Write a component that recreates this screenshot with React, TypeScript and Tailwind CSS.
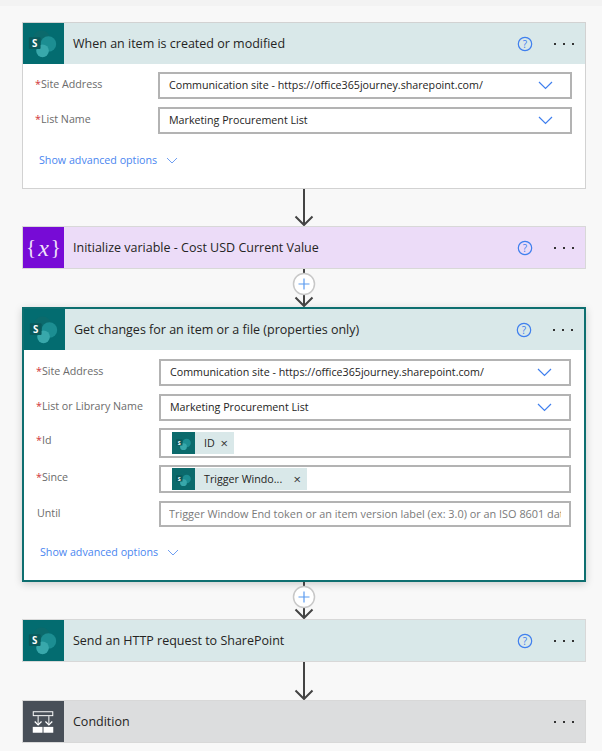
import { ReactNode } from "react";

const font = { fontFamily: '"Open Sans", "Noto Sans", sans-serif' };

function SharePointIcon({ size = 42 }: { size?: number }) {
  return (
    <svg width={size} height={size} viewBox="0 0 42 42">
      <circle cx="19" cy="16" r="9" fill="#0b6a6c" />
      <circle cx="26" cy="21" r="8" fill="#1c8e92" />
      <circle cx="20" cy="28" r="6.5" fill="#38a8ab" />
      <rect x="6" y="14" width="12" height="12" rx="1" fill="#0a5a5c" />
      <text x="12" y="24" textAnchor="middle" fontSize="10" fontWeight="700" fill="#ffffff" fontFamily="Open Sans, sans-serif">
        S
      </text>
    </svg>
  );
}

function VariableIcon() {
  return (
    <div className="flex items-center justify-center text-[#f1e3fb]">
      <span className="text-[21px] leading-none" style={{ fontFamily: '"Liberation Serif", serif' }}>{"{"}</span>
      <span className="mx-[2px] text-[24px] italic leading-none" style={{ fontFamily: '"Liberation Serif", serif' }}>x</span>
      <span className="text-[21px] leading-none" style={{ fontFamily: '"Liberation Serif", serif' }}>{"}"}</span>
    </div>
  );
}

function ConditionIcon() {
  return (
    <svg width="42" height="42" viewBox="0 0 42 42">
      <rect x="10.5" y="10.5" width="20" height="4" fill="none" stroke="#ffffff" strokeWidth="1" />
      <path d="M15.5 15v9M26.5 15v9" stroke="#ffffff" strokeWidth="1" fill="none" />
      <path d="M12 20.500l3.500 3.500 3.500-3.500M23 20.500l3.500 3.500 3.500-3.500" stroke="#ffffff" strokeWidth="1.300" fill="none" />
      <rect x="10" y="26" width="10" height="6" fill="#ffffff" />
      <rect x="21" y="26" width="10" height="6" fill="#ffffff" />
    </svg>
  );
}

function Header({
  icon,
  iconBg,
  bg,
  title,
  help = true,
}: {
  icon: ReactNode;
  iconBg: string;
  bg: string;
  title: string;
  help?: boolean;
}) {
  return (
    <div className={`flex h-[41px] items-center ${bg}`}>
      <div className={`flex h-[41px] w-[41px] shrink-0 items-center justify-center ${iconBg}`}>{icon}</div>
      <div className="ml-[9px] flex-1 pt-[2px] text-[12.500px] text-[#252423]">{title}</div>
      {help && (
        <svg width="16" height="16" viewBox="0 0 16 16" className="mr-[21px]">
          <circle cx="8" cy="8" r="6.700" fill="none" stroke="#3f7fee" strokeWidth="1.200" />
          <text x="8" y="11.500" textAnchor="middle" fontSize="10" fill="#3f7fee" fontFamily="Open Sans, sans-serif">
            ?
          </text>
        </svg>
      )}
      <div className="mr-[11px] flex gap-[7px]">
        <span className="h-[2px] w-[2px] bg-[#333333]" />
        <span className="h-[2px] w-[2px] bg-[#333333]" />
        <span className="h-[2px] w-[2px] bg-[#333333]" />
      </div>
    </div>
  );
}

function Chevron({ className }: { className?: string }) {
  return (
    <svg width="15" height="9" viewBox="0 0 15 9" className={className}>
      <path d="M1 1l6.500 6.500L14 1" fill="none" stroke="#3f7fee" strokeWidth="1.200" />
    </svg>
  );
}

function Field({
  label,
  required = true,
  h,
  children,
  className = "",
}: {
  label: string;
  required?: boolean;
  h: string;
  children: ReactNode;
  className?: string;
}) {
  return (
    <div className={`flex items-start ${className}`}>
      <div className={`w-[123px] shrink-0 pt-[4px] text-[10.700px] leading-[16px] text-[#6b6b6b] ${required ? "" : "pl-[1px]"}`}>
        {required && <span className="text-[#d13438]">*</span>}
        {label}
      </div>
      <div className={`flex flex-1 items-center overflow-hidden border-2 border-[#b3b3b3] bg-white ${h}`}>{children}</div>
    </div>
  );
}

function Dropdown({ text }: { text: string }) {
  return (
    <>
      <span className="ml-[9px] flex-1 text-[10.700px] text-[#252423]">{text}</span>
      <Chevron className="mr-[17px]" />
    </>
  );
}

function Token({ text, wide }: { text: string; wide?: boolean }) {
  return (
    <div className={`ml-[11px] flex h-[22px] items-center bg-[#d9e8e9] ${wide ? "w-[135px]" : "w-[62px]"}`}>
      <div className="flex h-[22px] w-[23px] shrink-0 items-center justify-center bg-[#0b6a6c]">
        <SharePointIcon size={22} />
      </div>
      <span className="ml-[9px] flex-1 text-[10.700px] text-[#252423]">{text}</span>
      <span className="mr-[6px] text-[13px] leading-none text-[#333333]">×</span>
    </div>
  );
}

function ShowAdvanced() {
  return (
    <div className="flex items-center">
      <span className="text-[10.700px] leading-[16px] text-[#4a86f0]">Show advanced options</span>
      <svg width="12" height="7" viewBox="0 0 12 7" className="ml-[9px]">
        <path d="M1 1l5 5 5-5" fill="none" stroke="#6f9ff2" strokeWidth="1" />
      </svg>
    </div>
  );
}

function Arrow({ h }: { h: number }) {
  return (
    <div className="flex justify-center">
      <svg width="20" height={h} viewBox={`0 0 20 ${h}`}>
        <path d={`M10 0v${h - 1}`} stroke="#444444" strokeWidth="2" fill="none" />
        <path d={`M1.500 ${h - 9.500}L10 ${h - 1}L18.500 ${h - 9.500}`} stroke="#444444" strokeWidth="2" fill="none" />
      </svg>
    </div>
  );
}

function PlusConnector({ h }: { h: number }) {
  return (
    <div className="flex justify-center">
      <svg width="26" height={h} viewBox={`0 0 26 ${h}`}>
        <path d={`M13 0v${h - 1}`} stroke="#444444" strokeWidth="2" fill="none" />
        <path d={`M4.500 ${h - 9.500}L13 ${h - 1}L21.500 ${h - 9.500}`} stroke="#444444" strokeWidth="2" fill="none" />
        <circle cx="13" cy="15" r="10.500" fill="#ffffff" stroke="#c8c8c8" strokeWidth="1.500" />
        <path d="M13 9.500v11M7.500 15h11" stroke="#5b9bf0" strokeWidth="1.200" fill="none" />
      </svg>
    </div>
  );
}

export default function App() {
  return (
    <div className="h-[751px] w-[602px] overflow-hidden bg-[#f8f8f8]" style={font}>
      <div className="h-[6px] bg-[#f3f3f3]" />
      <div className="pl-[22px] pr-[16px] pt-[16px]">
        <div className="h-[167px] border border-[#d2d2d2] bg-white">
          <Header icon={<SharePointIcon />} iconBg="bg-[#036c70]" bg="bg-[#d9e8e9]" title="When an item is created or modified" />
          <div className="pl-[12px] pr-[13px] pt-[8px]">
            <Field label="Site Address" h="h-[27px]">
              <Dropdown text="Communication site - https://office365journey.sharepoint.com/" />
            </Field>
            <Field label="List Name" h="h-[27px]" className="mt-[8px]">
              <Dropdown text="Marketing Procurement List" />
            </Field>
            <div className="mt-[18px] pl-[4px]">
              <ShowAdvanced />
            </div>
          </div>
        </div>

        <Arrow h={37} />

        <div className="h-[43px] border border-[#d8d8d8]">
          <Header icon={<VariableIcon />} iconBg="bg-[#770bd6]" bg="bg-[#ecdcf8]" title="Initialize variable - Cost USD Current Value" />
        </div>

        <PlusConnector h={38} />

        <div className="h-[275px] border-2 border-[#0e6f70] bg-white shadow-[0_2px_8px_rgba(0,0,0,0.18)]">
          <Header icon={<SharePointIcon />} iconBg="bg-[#036c70]" bg="bg-[#d9e8e9]" title="Get changes for an item or a file (properties only)" />
          <div className="pl-[12px] pr-[13px] pt-[9px]">
            <Field label="Site Address" h="h-[27px]">
              <Dropdown text="Communication site - https://office365journey.sharepoint.com/" />
            </Field>
            <Field label="List or Library Name" h="h-[27px]" className="mt-[8px]">
              <Dropdown text="Marketing Procurement List" />
            </Field>
            <Field label="Id" h="h-[30px]" className="mt-[7px]">
              <Token text="ID" />
            </Field>
            <Field label="Since" h="h-[28px]" className="mt-[7px]">
              <Token text="Trigger Windo..." wide />
            </Field>
            <Field label="Until" required={false} h="h-[26px]" className="mt-[8px]">
              <span className="ml-[8px] mr-[8px] overflow-hidden whitespace-nowrap text-[10.900px] text-[#7a7a7a]">
                Trigger Window End token or an item version label (ex: 3.0) or an ISO 8601 date
              </span>
            </Field>
            <div className="mt-[17px] pl-[4px]">
              <ShowAdvanced />
            </div>
          </div>
        </div>

        <PlusConnector h={37} />

        <div className="h-[43px] border border-[#d8d8d8]">
          <Header icon={<SharePointIcon />} iconBg="bg-[#036c70]" bg="bg-[#d9e8e9]" title="Send an HTTP request to SharePoint" />
        </div>

        <Arrow h={38} />

        <div className="h-[43px] border border-[#d8d8d8]">
          <Header icon={<ConditionIcon />} iconBg="bg-[#484f58]" bg="bg-[#dcddde]" title="Condition" help={false} />
        </div>
      </div>
    </div>
  );
}
